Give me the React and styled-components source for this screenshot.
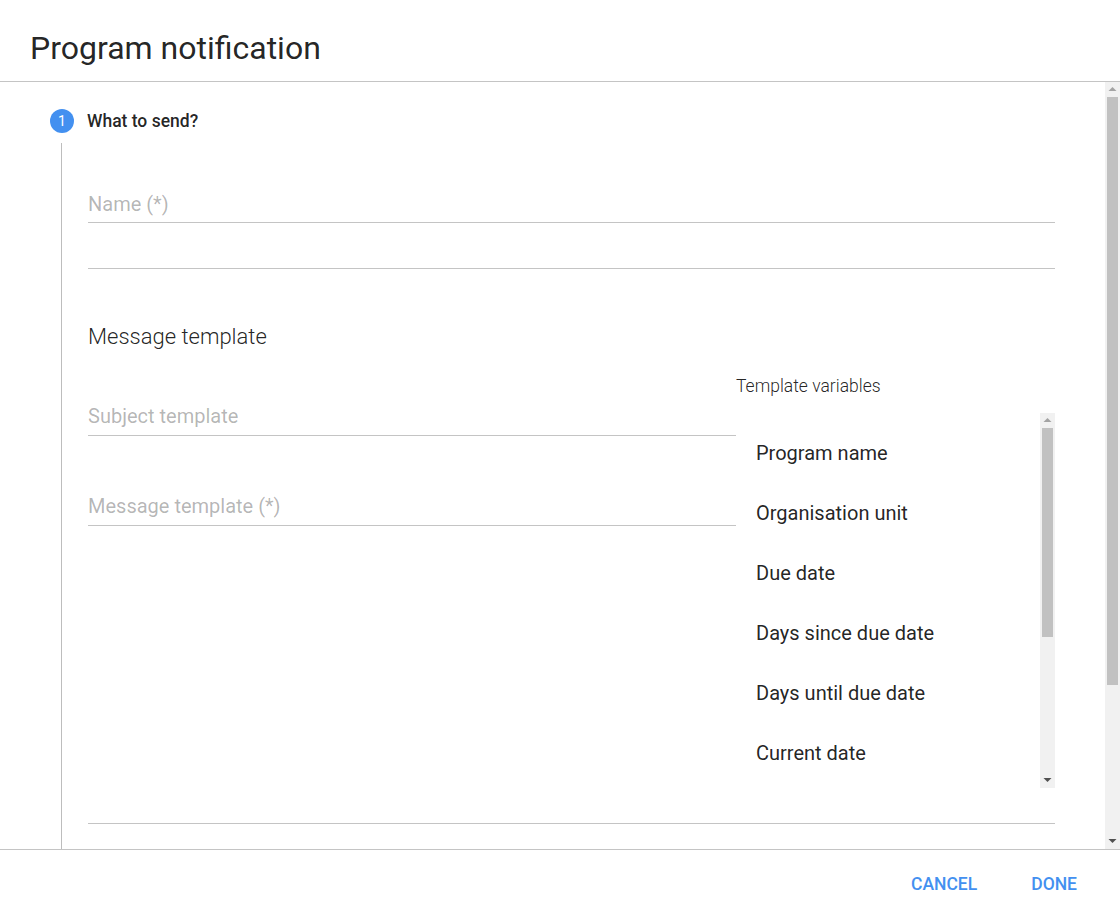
import React from 'react';
import styled, { createGlobalStyle } from 'styled-components';

const GlobalStyle = createGlobalStyle`
  html, body {
    margin: 0;
    padding: 0;
    background: #fff;
    font-family: Roboto, "Liberation Sans", sans-serif;
    color: rgba(0, 0, 0, 0.87);
  }
`;

const Dialog = styled.div`
  display: flex;
  flex-direction: column;
  height: 100vh;
  background: #fff;
`;

const Header = styled.div`
  height: 82px;
  flex-shrink: 0;
  box-sizing: border-box;
  display: flex;
  align-items: center;
  padding: 15px 0 0 30px;
  border-bottom: 1px solid #c4c4c4;
`;

const Title = styled.h1`
  margin: 0;
  font-size: 32px;
  font-weight: 400;
  line-height: 36px;
  color: rgba(0, 0, 0, 0.87);
`;

const ScrollArea = styled.div`
  flex: 1;
  min-height: 0;
  display: flex;
`;

const ScrollBody = styled.div`
  flex: 1;
  min-width: 0;
  overflow: hidden;
  padding-top: ${(p) => p.$top || 0}px;
  box-sizing: border-box;
`;

/* classic desktop scrollbar: arrow, track with thumb, arrow */
const Scrollbar = styled.div`
  width: 15px;
  flex-shrink: 0;
  background: #f1f1f1;
  display: flex;
  flex-direction: column;
`;

const ArrowButton = styled.div`
  height: 15px;
  flex-shrink: 0;
  display: flex;
  align-items: center;
  justify-content: center;
`;

const Track = styled.div`
  flex: 1;
`;

const Thumb = styled.div`
  margin: 0 2px;
  background: #c1c1c1;
`;

const Arrow = ({ down, disabled }) => (
  <ArrowButton>
    <svg width="15" height="15" viewBox="0 0 15 15">
      <path
        d={down ? 'M3.5 5H11.5L7.5 9Z' : 'M3.5 9H11.5L7.5 5Z'}
        fill={disabled ? '#a3a3a3' : '#505050'}
      />
    </svg>
  </ArrowButton>
);

const FakeScrollbar = ({ thumb }) => (
  <Scrollbar>
    <Arrow disabled />
    <Track>
      <Thumb style={{ height: thumb }} />
    </Track>
    <Arrow down />
  </Scrollbar>
);

const StepHeader = styled.div`
  display: flex;
  align-items: center;
  gap: 13px;
  padding: 0 0 10px 50px;
`;

const StepIcon = styled.div`
  width: 24px;
  height: 24px;
  border-radius: 50%;
  background: #4390f0;
  color: #fff;
  font-size: 14px;
  line-height: 24px;
  text-align: center;
`;

const StepLabel = styled.span`
  font-size: 17.5px;
  font-weight: 500;
  line-height: 24px;
  color: rgba(0, 0, 0, 0.87);
`;

const StepBody = styled.div`
  margin-left: 61px;
  border-left: 1px solid #bdbdbd;
  padding: 0 50px 219px 26px;
`;

const Field = styled.div`
  padding: ${(p) => p.$top}px 0 ${(p) => (p.$bottom ?? 6)}px;
  border-bottom: 1px solid #c4c4c4;
  min-height: ${(p) => p.$height || 0}px;
  box-sizing: border-box;
`;

const Placeholder = styled.div`
  font-size: 20px;
  line-height: 24px;
  color: rgba(0, 0, 0, 0.3);
`;

const SectionTitle = styled.h2`
  margin: 54px 0 0;
  font-size: 22px;
  font-weight: 300;
  line-height: 28px;
  color: rgba(0, 0, 0, 0.87);
`;

const Columns = styled.div`
  display: grid;
  grid-template-columns: 648px 1fr;
  margin-top: 24px;
`;

const LeftColumn = styled.div`
  display: flex;
  flex-direction: column;
`;

const RightColumn = styled.div`
  display: flex;
  flex-direction: column;
`;

const VariablesLabel = styled.div`
  font-size: 17.5px;
  font-weight: 300;
  line-height: 20px;
  padding-top: 1px;
  color: rgba(0, 0, 0, 0.87);
`;

const VariableBox = styled.div`
  margin-top: 17px;
  height: 375px;
  display: flex;
`;

const VariableList = styled.ul`
  flex: 1;
  list-style: none;
  margin: 0;
  padding: 10px 0;
  overflow: hidden;
`;

const VariableItem = styled.li`
  height: 60px;
  display: flex;
  align-items: center;
  padding-left: 20px;
  font-size: 20px;
  white-space: nowrap;
  color: rgba(0, 0, 0, 0.87);
`;

const Footer = styled.div`
  height: 67px;
  flex-shrink: 0;
  box-sizing: border-box;
  border-top: 1px solid #c4c4c4;
  display: flex;
  align-items: center;
  justify-content: flex-end;
  gap: 14px;
  padding: 1px 23px 0 0;
`;

const Button = styled.button`
  height: 45px;
  padding: 0 20px;
  border: none;
  background: transparent;
  font-family: inherit;
  font-size: 17.5px;
  font-weight: 500;
  text-transform: uppercase;
  color: #4390f0;
  cursor: pointer;
`;

const variables = [
  'Program name',
  'Organisation unit',
  'Due date',
  'Days since due date',
  'Days until due date',
  'Current date',
];

const App = () => {
  return (
    <>
      <GlobalStyle />
      <Dialog>
        <Header>
          <Title>Program notification</Title>
        </Header>
        <ScrollArea>
          <ScrollBody $top={27}>
            <StepHeader>
              <StepIcon>1</StepIcon>
              <StepLabel>What to send?</StepLabel>
            </StepHeader>
            <StepBody>
              <Field $top={49}>
                <Placeholder>Name (*)</Placeholder>
              </Field>
              <Field $top={0} $bottom={0} $height={46} />
              <SectionTitle>Message template</SectionTitle>
              <Columns>
                <LeftColumn>
                  <Field $top={29} $bottom={7}>
                    <Placeholder>Subject template</Placeholder>
                  </Field>
                  <Field $top={58} $bottom={7}>
                    <Placeholder>Message template (*)</Placeholder>
                  </Field>
                </LeftColumn>
                <RightColumn>
                  <VariablesLabel>Template variables</VariablesLabel>
                  <VariableBox>
                    <VariableList>
                      {variables.map((v) => (
                        <VariableItem key={v}>{v}</VariableItem>
                      ))}
                    </VariableList>
                    <FakeScrollbar thumb={209} />
                  </VariableBox>
                </RightColumn>
              </Columns>
              <Field $top={0} $bottom={0} $height={36} />
            </StepBody>
          </ScrollBody>
          <FakeScrollbar thumb={588} />
        </ScrollArea>
        <Footer>
          <Button>Cancel</Button>
          <Button>Done</Button>
        </Footer>
      </Dialog>
    </>
  );
};

export default App;
